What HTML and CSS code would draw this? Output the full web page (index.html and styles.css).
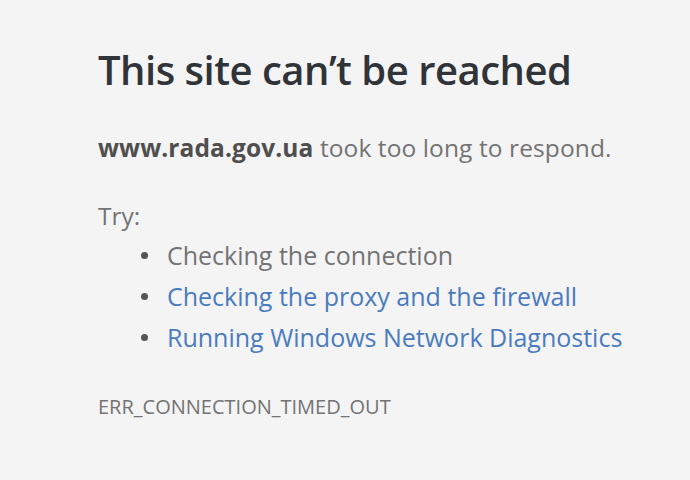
FILE: index.html
```html
<!DOCTYPE html>
<html lang="en">
<head>
    <meta charset="UTF-8">
    <meta name="viewport" content="width=device-width, initial-scale=1.0">
    <title>This site can't be reached</title>
    <link rel="stylesheet" href="styles.css">
</head>
<body>
    <div class="container">
        <h1>This site can’t be reached</h1>
        <p class="summary"><strong>www.rada.gov.ua</strong> took too long to respond.</p>

        <div class="suggestions">
            <p class="try">Try:</p>
            <ul>
                <li>Checking the connection</li>
                <li><a href="#">Checking the proxy and the firewall</a></li>
                <li><a href="#">Running Windows Network Diagnostics</a></li>
            </ul>
        </div>

        <div class="error-code">ERR_CONNECTION_TIMED_OUT</div>
    </div>
</body>
</html>
```

FILE: styles.css
```css
/* Reset some default styles */
* {
    margin: 0;
    padding: 0;
    box-sizing: border-box;
}

body {
    font-family: "Open Sans", "Noto Sans", Arial, sans-serif;
    background-color: #f4f4f4;
    color: #737373;
    min-height: 100vh;
}

.container {
    padding: 46px 0 0 98px;
}

h1 {
    font-size: 40px;
    font-weight: 600;
    color: #303338;
    letter-spacing: -0.5px;
    line-height: 48px;
}

.summary {
    margin-top: 39px;
    font-size: 24.5px;
    line-height: 30px;
    letter-spacing: 0.1px;
}

.summary strong {
    color: #4f4f4f;
    font-weight: 700;
}

.suggestions {
    margin-top: 38px;
    font-size: 24.5px;
}

.try {
    line-height: 30px;
}

ul {
    list-style: none;
    margin-top: 4px;
    padding-left: 43px;
    font-size: 25px;
}

li {
    position: relative;
    line-height: 41px;
    padding-left: 26px;
}

li::before {
    content: "";
    position: absolute;
    left: 0;
    top: 17px;
    width: 7px;
    height: 7px;
    border-radius: 50%;
    background-color: #555;
}

a {
    color: #4b7bbf;
    text-decoration: none;
}

.error-code {
    margin-top: 35px;
    font-size: 20px;
    color: #737373;
}
```
